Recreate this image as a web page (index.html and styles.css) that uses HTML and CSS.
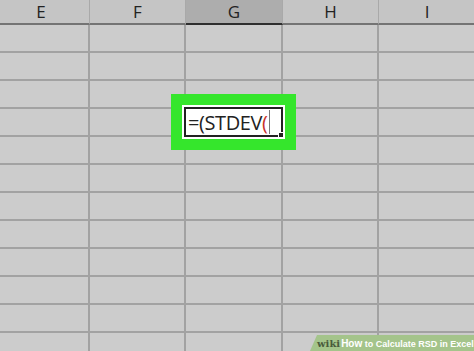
FILE: index.html
```html
<!doctype html>
<html>
<head>
  <title>Calculate RSD in Excel</title>
  <link rel="stylesheet" href="styles.css">
</head>
<body>
  <div class="sheet">
    <div class="hd">E</div>
    <div class="hd">F</div>
    <div class="hd sel">G</div>
    <div class="hd">H</div>
    <div class="hd">I</div>
  </div>
  <div class="sheet body" id="grid"></div>
  <div class="badge"><span class="wiki">wiki</span><span class="how">How</span> to Calculate RSD in Excel</div>
  <script>
    var grid = document.getElementById("grid");
    for (var r = 0; r < 12; r++) {
      for (var c = 0; c < 5; c++) {
        var d = document.createElement("div");
        d.className = "cell";
        if (r == 3 && c == 2) {
          d.className = "cell active";
          d.innerHTML = '<span class="f">=(STDEV<span class="paren">(</span></span><span class="caret"></span><span class="handle"></span>';
        }
        grid.appendChild(d);
      }
    }
  </script>
</body>
</html>
```

FILE: styles.css
```css
html, body {
  margin: 0;
  height: 100%;
  overflow: hidden;
  background: #cccccc;
}
.sheet {
  display: grid;
  grid-template-columns: 97px 96px 97px 96px 97px;
  margin-left: -7px;
  font-family: "Open Sans", "Liberation Sans", sans-serif;
}
.hd {
  height: 23px;
  background: #c5c5c5;
  border-right: 1px solid #a9a9a9;
  border-bottom: 2px solid #747474;
  color: #222;
  font-size: 17px;
  line-height: 23px;
  text-align: center;
}
.hd.sel {
  background: #adadad;
  border-bottom: 2px solid #2e2e2e;
}
.cell {
  height: 26px;
  border-right: 2px solid #a2a2a2;
  border-bottom: 2px solid #a2a2a2;
}
.cell.active {
  position: relative;
  z-index: 1;
  margin-left: -2px;
  margin-top: -2px;
  background: #fff;
  border: 2px solid #222;
  box-shadow: 0 0 0 2px #fff, 0 0 0 13px #35e62c;
  display: flex;
  align-items: center;
}
.f {
  font-size: 20px;
  color: #222;
  padding-left: 2px;
  letter-spacing: -0.4px;
}
.paren { color: #c8322a; }
.caret {
  width: 1px;
  height: 24px;
  margin-left: 1px;
  background: #7a7a7a;
}
.handle {
  position: absolute;
  right: -3px;
  bottom: -3px;
  width: 4px;
  height: 4px;
  background: #222;
  border: 1px solid #fff;
}
.badge {
  position: absolute;
  right: 0;
  bottom: 0;
  width: 157px;
  height: 16px;
  padding-left: 7px;
  background: #a4c48b;
  clip-path: polygon(7px 0, 100% 0, 100% 100%, 0 100%);
  color: #fff;
  font: bold 9px "Liberation Sans", Arial, sans-serif;
  line-height: 17px;
  white-space: nowrap;
}
.wiki {
  font-family: "DejaVu Serif", serif;
  color: #4a5a3c;
  font-size: 10px;
  margin-right: 1px;
}
.how { font-size: 10px; }
```
